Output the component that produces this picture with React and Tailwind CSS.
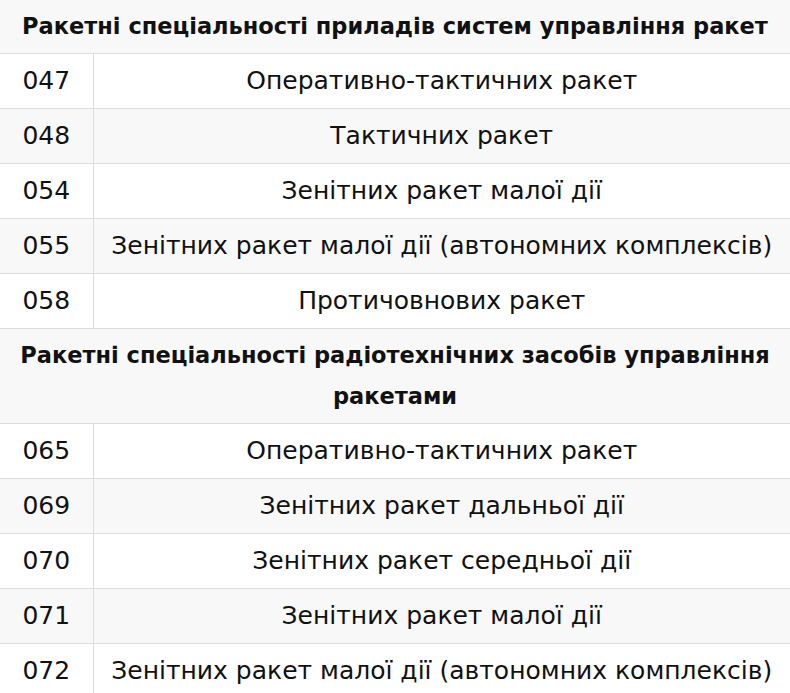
import { Fragment } from 'react';

const SECTIONS = [
  {
    title: 'Ракетні спеціальності приладів систем управління ракет',
    rows: [
      ['047', 'Оперативно-тактичних ракет'],
      ['048', 'Тактичних ракет'],
      ['054', 'Зенітних ракет малої дії'],
      ['055', 'Зенітних ракет малої дії (автономних комплексів)'],
      ['058', 'Протичовнових ракет'],
    ],
  },
  {
    title: 'Ракетні спеціальності радіотехнічних засобів управління ракетами',
    rows: [
      ['065', 'Оперативно-тактичних ракет'],
      ['069', 'Зенітних ракет дальньої дії'],
      ['070', 'Зенітних ракет середньої дії'],
      ['071', 'Зенітних ракет малої дії'],
      ['072', 'Зенітних ракет малої дії (автономних комплексів)'],
    ],
  },
];

export default function App() {
  return (
    <div className="w-[790px] bg-white text-[#111] font-['DejaVu_Sans',sans-serif]">
      <table className="w-full border-collapse">
        <tbody>
          {SECTIONS.map(s => (
            <Fragment key={s.title}>
              <tr className="bg-[#f8f8f8]">
                <th colSpan={2} className="border-b border-[#dddddd] px-4 py-[6px] text-[22.5px] leading-[41px] font-bold text-center">
                  {s.title}
                </th>
              </tr>
              {s.rows.map(([code, name], i) => (
                <tr key={code} className={i % 2 ? 'bg-[#f8f8f8]' : 'bg-white'}>
                  <td className="w-[93px] h-[55px] p-0 border-b border-r border-[#dddddd] text-center text-[25px]">{code}</td>
                  <td className="h-[55px] p-0 border-b border-[#dddddd] text-center text-[25px]">{name}</td>
                </tr>
              ))}
            </Fragment>
          ))}
        </tbody>
      </table>
    </div>
  );
}
